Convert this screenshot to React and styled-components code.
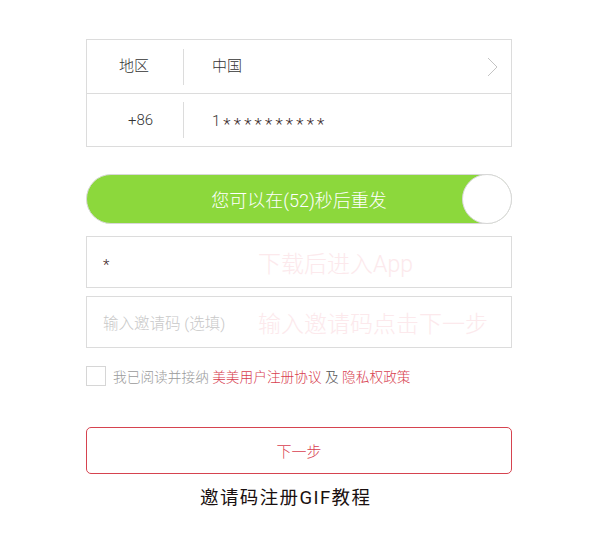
import React from "react";
import styled, { createGlobalStyle } from "styled-components";

const FONT = `"Roboto", "Liberation Sans", "Noto Sans CJK SC", sans-serif`;

const Global = createGlobalStyle`
  html, body { margin: 0; padding: 0; background: #fff; }
  body { font-family: ${FONT}; font-weight: 300; }
`;

const Page = styled.div`
  width: 600px;
  height: 555px;
  box-sizing: border-box;
  padding: 39px 88px 0 86px;
  display: flex;
  flex-direction: column;
`;

const InfoBox = styled.div`
  border: 1px solid #dcdcdc;
  display: flex;
  flex-direction: column;
`;

const InfoRow = styled.div`
  height: ${(p) => p.$h}px;
  display: flex;
  align-items: center;
  position: relative;
  & + & { border-top: 1px solid #dcdcdc; }
`;

const Label = styled.div`
  width: 96px;
  box-sizing: border-box;
  padding-left: ${(p) => p.$pad}px;
  font-size: 15px;
  line-height: 1;
  color: #333;
  font-family: ${FONT};
`;

const Divider = styled.div`
  width: 1px;
  height: 36px;
  background: #dcdcdc;
`;

const Value = styled.div`
  flex: 1;
  padding-left: 28px;
  font-size: 15px;
  line-height: 1;
  color: #333;
  font-family: ${FONT};
`;

const Mask = styled.span`
  position: relative;
  top: 4px;
  font-size: 17px;
  letter-spacing: 3.2px;
  margin-left: 3px;
  color: #3a2a2a;
`;

const Chevron = styled.svg`
  position: absolute;
  right: 13px;
  top: 17px;
`;

const Pill = styled.div`
  margin-top: 27px;
  height: 50px;
  border-radius: 25px;
  background: #8cd83c;
  border: 1px solid #d8d8d8;
  box-sizing: border-box;
  display: flex;
  align-items: center;
  justify-content: center;
  position: relative;
  color: #fff;
  font-size: 18px;
  font-family: ${FONT};
`;

const Knob = styled.div`
  position: absolute;
  right: -1px;
  top: -1px;
  width: 50px;
  height: 50px;
  border-radius: 50%;
  background: #fff;
  border: 1px solid #d8d8d8;
  box-sizing: border-box;
`;

const Field = styled.div`
  margin-top: ${(p) => p.$mt}px;
  height: 52px;
  border: 1px solid #dcdcdc;
  box-sizing: border-box;
  display: flex;
  align-items: center;
  padding-left: 16px;
  position: relative;
  font-family: ${FONT};
`;

const Star = styled.span`
  font-size: 15px;
  color: #3a2222;
  position: relative;
  top: 3px;
`;

const Placeholder = styled.span`
  font-size: 15.5px;
  color: #c8c8c8;
`;

const Watermark = styled.span`
  position: absolute;
  left: 171px;
  top: 50%;
  transform: translateY(-50%);
  font-size: 23px;
  color: #fce9ec;
  white-space: nowrap;
  font-family: ${FONT};
`;

const Agree = styled.div`
  margin-top: 18px;
  display: flex;
  align-items: center;
  gap: 7px;
  font-family: ${FONT};
  font-size: 13.7px;
  color: #9a9a9a;
`;

const Box = styled.div`
  width: 20px;
  height: 20px;
  border: 1px solid #d6d6d6;
  box-sizing: border-box;
`;

const Link = styled.span`
  color: #d8404f;
`;

const Dark = styled.span`
  color: #555;
`;

const NextButton = styled.div`
  margin-top: 41px;
  height: 47px;
  border: 1.5px solid #d6434f;
  border-radius: 5px;
  box-sizing: border-box;
  display: flex;
  align-items: center;
  justify-content: center;
  color: #d8404f;
  font-size: 15px;
  font-family: ${FONT};
`;

const Tutorial = styled.div`
  margin-top: 9px;
  padding-left: 114px;
  font-size: 18.5px;
  font-weight: 400;
  letter-spacing: 1.4px;
  color: #1a1010;
  font-family: ${FONT};
`;

export default function App() {
  return (
    <>
      <Global />
      <Page>
        <InfoBox>
          <InfoRow $h={53}>
            <Label $pad={32}>地区</Label>
            <Divider />
            <Value>中国</Value>
            <Chevron width="11" height="20" viewBox="0 0 11 20">
              <path d="M1 1 L10 10 L1 19" fill="none" stroke="#c4c4c4" strokeWidth="1" />
            </Chevron>
          </InfoRow>
          <InfoRow $h={52}>
            <Label $pad={41}>+86</Label>
            <Divider />
            <Value>
              1<Mask>**********</Mask>
            </Value>
          </InfoRow>
        </InfoBox>

        <Pill>
          您可以在(52)秒后重发
          <Knob />
        </Pill>

        <Field $mt={12}>
          <Star>*</Star>
          <Watermark>下载后进入App</Watermark>
        </Field>
        <Field $mt={8}>
          <Placeholder>输入邀请码 (选填)</Placeholder>
          <Watermark>输入邀请码点击下一步</Watermark>
        </Field>

        <Agree>
          <Box />
          <span>
            我已阅读并接纳 <Link>美美用户注册协议</Link> <Dark>及</Dark> <Link>隐私权政策</Link>
          </span>
        </Agree>

        <NextButton>下一步</NextButton>
        <Tutorial>邀请码注册GIF教程</Tutorial>
      </Page>
    </>
  );
}
